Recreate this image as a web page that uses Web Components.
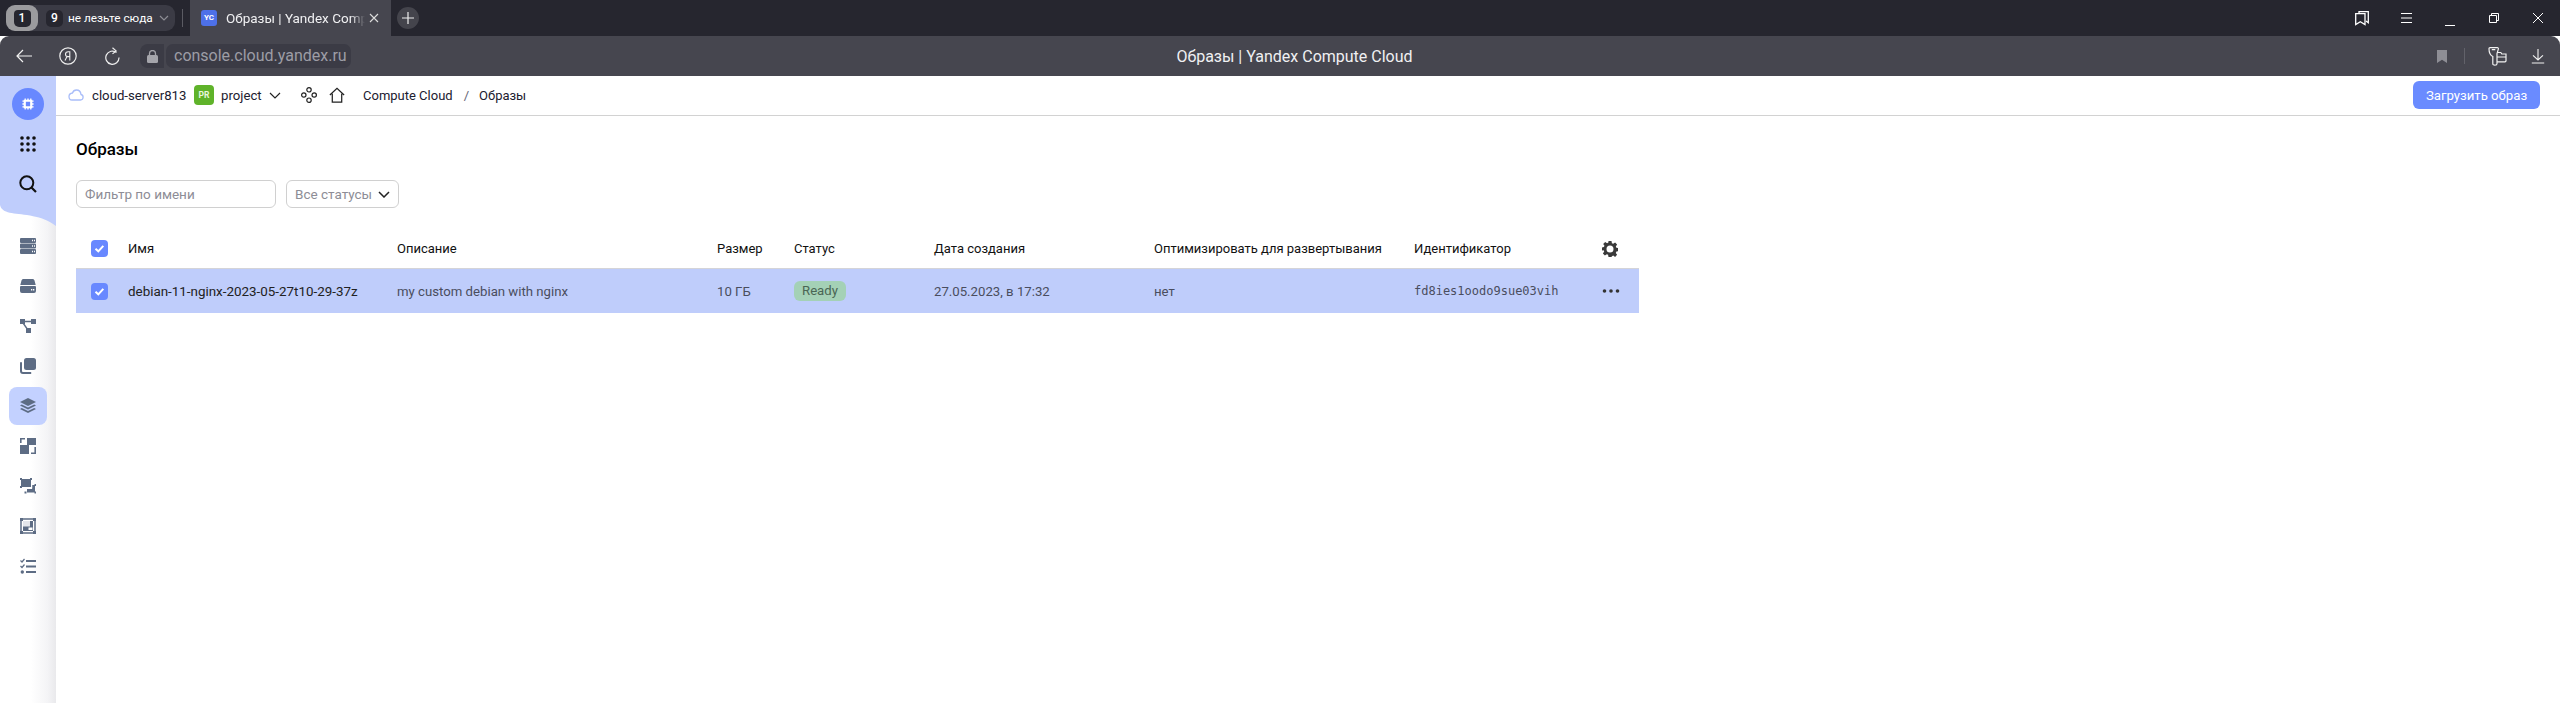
<!DOCTYPE html>
<html lang="ru"><head><meta charset="utf-8"><title>Образы | Yandex Compute Cloud</title>
<style>
html,body{margin:0;height:100%;overflow:hidden;background:#fff}
body{display:flex;flex-direction:column;font-family:Roboto,"Noto Sans",sans-serif}
app-body{flex:1}
</style></head><body>
<browser-tabs></browser-tabs>
<browser-toolbar></browser-toolbar>
<app-body>
  <side-nav slot="nav"></side-nav>
  <top-bar slot="top"></top-bar>
  <images-page></images-page>
</app-body>
<script>
function el(name,html){customElements.define(name,class extends HTMLElement{connectedCallback(){if(this.shadowRoot)return;this.attachShadow({mode:'open'}).innerHTML=typeof html==='function'?html(this):html}})}
const WS='fill="none" stroke="#fff" stroke-width="1.3"';
el('browser-tabs',`<style>
:host{display:flex;height:36px;background:#26262f;color:#fff;align-items:center;font:13px Roboto,sans-serif;box-sizing:border-box;padding-left:6px}
.group{display:flex;align-items:center;width:169px;height:26px;background:#3b3b45;border-radius:9px;box-sizing:border-box}
.one{width:32px;height:26px;border-radius:9px;background:#9b9b9e;display:flex;align-items:center;justify-content:center;flex:none}
.one b{width:17px;height:17px;background:#26262f;border-radius:4px 4px 5px 5px;font:500 12px/17px Roboto,sans-serif;text-align:center}
.nine{width:17px;height:17px;background:#26262f;border-radius:5px;font:500 12px/17px Roboto,sans-serif;text-align:center;margin-left:8px;flex:none}
.name{margin-left:5px;font-size:11.800px;white-space:nowrap;width:84px;flex:none}
.group svg{margin-left:7px;flex:none}
.sep{width:1px;height:18px;background:#5b5b63;margin:0 7px}
.tab{width:201px;height:36px;background:#46464f;display:flex;align-items:center;box-sizing:border-box;padding-left:11px}
.fav{width:16px;height:16px;border-radius:3px;background:#4d70e8;font:700 8px/16px Roboto,sans-serif;text-align:center;flex:none}
.title{margin-left:9px;width:139px;overflow:hidden;white-space:nowrap;font-size:13.5px;color:#f0f0f2;-webkit-mask:linear-gradient(90deg,#000 90%,transparent);mask:linear-gradient(90deg,#000 90%,transparent)}
.tab svg{margin-left:4px}
.plus{width:22px;height:22px;border-radius:50%;background:#44444c;margin-left:6px;display:flex;align-items:center;justify-content:center}
.right{margin-left:auto;display:flex;height:36px}
.right span{width:44px;display:flex;align-items:center;justify-content:center}
</style>
<div class="group"><span class="one"><b>1</b></span><span class="nine">9</span><span class="name">не лезьте сюда</span>
<svg width="10" height="6" viewBox="0 0 10 6"><path d="M1 1l4 4 4-4" fill="none" stroke="#8d8d94" stroke-width="1.2"/></svg></div>
<div class="sep"></div>
<div class="tab"><span class="fav">YC</span><span class="title">Образы | Yandex Compute Cloud</span>
<svg width="10" height="10" viewBox="0 0 10 10"><path d="M1 1l8 8M9 1l-8 8" stroke="#ddd" stroke-width="1.1"/></svg></div>
<div class="plus"><svg width="12" height="12" viewBox="0 0 12 12"><path d="M6 0v12M0 6h12" stroke="#eee" stroke-width="1.2"/></svg></div>
<div class="right">
<span><svg width="14" height="14" viewBox="0 0 14 14" style="overflow:visible"><path d="M4 2.5V0.7h9.3v11L11 10" ${WS}/><path d="M.7 2.6h9.3v11L5.3 10.8.7 13.6z" ${WS}/></svg></span>
<span><svg width="11" height="10" viewBox="0 0 11 10"><path d="M0 .5h11M0 5h11M0 9.500h11" stroke="#fff"/></svg></span>
<span><svg width="10" height="10" viewBox="0 0 10 10" style="overflow:visible"><path d="M0 12.500h10" stroke="#fff" stroke-width="1"/></svg></span>
<span><svg width="10" height="10" viewBox="0 0 10 10"><path d="M2.500 2.500V.5h7v7h-2M.5 2.500h7v7h-7z" fill="none" stroke="#fff"/></svg></span>
<span><svg width="10" height="10" viewBox="0 0 10 10"><path d="M0 0l10 10M10 0L0 10" stroke="#fff"/></svg></span>
</div>`);
el('browser-toolbar',`<style>
:host{display:flex;height:40px;background:#46464f;border-radius:9px 9px 0 0;align-items:center;box-sizing:border-box;color:#fff}
.btn{width:44px;display:flex;justify-content:center;flex:none}
.lock{width:24px;height:24px;background:#3b3b45;border-radius:8px 0 0 8px;display:flex;align-items:center;justify-content:center;margin-left:6px;flex:none}
.url{height:24px;background:#3b3b45;border-radius:7px;margin-left:2px;padding:0 8px;font:16px/24px Roboto,"Noto Sans",sans-serif;color:#9d9da5;white-space:nowrap;flex:none;box-sizing:border-box;width:185px}
.center{flex:1;text-align:center;font:16px Roboto,sans-serif;color:#f0f0f2;margin-left:-90px;padding-right:95px}
.end{display:flex;align-items:center}
.vsep{width:1px;height:16px;background:#62626a;margin:0 7px 0 0}
</style>
<span class="btn" style="margin-left:2px"><svg width="16" height="14" viewBox="0 0 16 14"><path d="M7 1L1 7l6 6M1 7h15" fill="none" stroke="#f2f2f2" stroke-width="1.2"/></svg></span>
<span class="btn"><svg width="18" height="18" viewBox="0 0 18 18"><circle cx="9" cy="9" r="8.200" fill="none" stroke="#eee" stroke-width="1.200"/><path d="M10.800 13.500V4.700H9.200c-1.600 0-2.700 1-2.700 2.500s1 2.400 2.600 2.400h1.700M8 9.600l-2 3.900" fill="none" stroke="#eee" stroke-width="1.100"/></svg></span>
<span class="btn"><svg width="16" height="18" viewBox="0 0 16 18"><path d="M12.500 5.500A6.600 6.600 0 1 0 15 10.500M8.500 0.700l3.600 3.200-3.600 3" fill="none" stroke="#eee" stroke-width="1.200"/></svg></span>
<span class="lock"><svg width="11" height="13" viewBox="0 0 11 13"><rect y="5" width="11" height="8" rx="1.500" fill="#a5a5ab"/><path d="M2.500 5.500V3.500a3 3 0 0 1 6 0v2" fill="none" stroke="#a5a5ab" stroke-width="1.300"/></svg></span>
<span class="url">console.cloud.yandex.ru</span>
<span class="center">Образы | Yandex Compute Cloud</span>
<span class="end">
<span class="btn" style="width:38px;margin-right:3px"><svg width="10" height="13" viewBox="0 0 10 13"><path d="M0 0h10v13L5 9.700 0 13z" fill="#8e8e95"/></svg></span>
<span class="vsep"></span>
<span class="btn" style="margin:0 1px 0 7px;width:36px"><svg width="19" height="19" viewBox="0 0 19 19"><path d="M2 .7h7.300c.8 0 1.200.5 1.100 1.200L9 6.700v10c0 2-4.200 2-4.200 0V9.500C2.500 8.400 1 5 1 1.700 1 1.100 1.400.7 2 .7zM3.800 2.700h3.500M9.200 5.500h3.600l1 1.500H18v6.800a1 1 0 0 1-1 1H9M9 10h9" fill="none" stroke="#f2f2f2" stroke-width="1.200"/></svg></span>
<span class="btn"><svg width="14" height="15" viewBox="0 0 14 15"><path d="M7 0v11M2 6.300L7 11l5-4.700M.8 14h12.400" fill="none" stroke="#f2f2f2" stroke-width="1.100"/></svg></span>
</span>`);
el('app-body',`<style>
:host{display:grid;grid-template-columns:56px 1fr;grid-template-rows:40px 1fr;min-height:0}
.nav{grid-row:1/3}
</style>
<div class="nav"><slot name="nav"></slot></div><div><slot name="top"></slot></div><div><slot></slot></div>`);
const G='#5d6c84';
const icons=[
`<path fill="${G}" fill-rule="evenodd" d="M1 0h14a1 1 0 0 1 1 1v3a1 1 0 0 1-1 1H1a1 1 0 0 1-1-1V1a1 1 0 0 1 1-1zm0 5.500h14a1 1 0 0 1 1 1v3a1 1 0 0 1-1 1H1a1 1 0 0 1-1-1v-3a1 1 0 0 1 1-1zm0 5.500h14a1 1 0 0 1 1 1v3a1 1 0 0 1-1 1H1a1 1 0 0 1-1-1v-3a1 1 0 0 1 1-1zM12 1.800v1.400h1V1.800zm2 0v1.400h1V1.800zm-2 5.500v1.400h1V7.300zm2 0v1.400h1V7.300zm-2 5.500v1.400h1v-1.400zm2 0v1.400h1v-1.400z"/>`,
`<path fill="${G}" fill-rule="evenodd" d="M3.500 1h9c1 0 1.700.6 2 1.500L15.700 7H.3l1.200-4.500C1.800 1.600 2.500 1 3.500 1zM1 8h14a1 1 0 0 1 1 1v4a2 2 0 0 1-2 2H2a2 2 0 0 1-2-2V9a1 1 0 0 1 1-1zm10 3v1.400h1.300V11zm2 0v1.400h1.300V11z"/>`,
`<g fill="${G}"><rect x="0" y="1" width="5" height="5"/><rect x="11" y="1" width="5" height="5"/><rect x="6" y="10" width="5" height="5"/></g><path d="M4 3.500h8M3 5l5 7" stroke="${G}" stroke-width="1.300" fill="none"/>`,
`<rect x="4" y="0" width="12" height="12" rx="2.500" fill="${G}"/><path d="M2.500 3.800v8.700a2 2 0 0 0 2 2h8.200" fill="none" stroke="${G}" stroke-width="2" transform="translate(-1.500 .5)"/>`,
`<path fill="${G}" d="M8 0l8 4-8 4-8-4z"/><path fill="${G}" d="M1.800 6.400L8 9.500l6.200-3.100L16 7.500 8 11.500 0 7.500z"/><path fill="${G}" d="M1.800 10L8 13l6.200-3 1.800 1-8 4-8-4z"/>`,
`<g fill="${G}"><rect x="0" y="7" width="9" height="9"/><rect x="7" y="0" width="9" height="7" /><path d="M0 5V0h5v1.600H1.600V5zM16 9v7h-5v-1.600h3.400V9z"/></g>`,
`<g fill="${G}"><rect x="1" y="1" width="10" height="8"/><rect x="0" y="0" width="2" height="2"/><rect x="10" y="0" width="2" height="2"/><rect x="0" y="8" width="2" height="2"/><rect x="14.500" y="6" width="1.500" height="2"/><rect x="14.500" y="13.500" width="1.500" height="2"/><rect x="4.500" y="13.500" width="2" height="2"/><rect x="7" y="11" width="8" height="3.500"/><rect x="12" y="7" width="3" height="4"/></g><path d="M11.800 7v3.500H6" stroke="#fff" fill="none" stroke-width=".8"/>`,
`<path fill="none" stroke="${G}" stroke-width="1.500" d="M1 1h14v14H1z"/><g fill="${G}"><rect x="0" y="0" width="3" height="3"/><rect x="13" y="0" width="3" height="3"/><rect x="0" y="13" width="3" height="3"/><rect x="13" y="13" width="3" height="3"/><rect x="3" y="3" width="10" height="10"/></g><rect x="3" y="3" width="7" height="5.500" fill="#e3e5ea"/><rect x="8.500" y="9.500" width="4" height="2.500" fill="#fff"/>`,
`<g stroke="${G}" fill="none"><path stroke-width="1.800" d="M6 3h10M6 8.500h10M6 14h10"/><path stroke-width="1.200" d="M.5 2.500l1.500 1.500 2.500-3M.5 8l1.500 1.500 2.500-3"/></g><circle cx="2.300" cy="14" r="1.700" fill="${G}"/>`];
el('side-nav',()=>`<style>
:host{display:flex;flex-direction:column;width:56px;height:100%;background:linear-gradient(90deg,#fff 55%,#f4f4f6 85%,#e9e9ec)}
.top{background:#bfcdfc;height:129px;box-sizing:border-box;padding-top:12px;display:flex;flex-direction:column;align-items:center}
.top .c{width:32px;height:32px;border-radius:50%;background:#6888ff;display:flex;align-items:center;justify-content:center;flex:none}
.top .r{height:40px;display:flex;align-items:center;margin-top:0}
.wave{display:block;height:21px;width:56px}
.items{display:flex;flex-direction:column}
.i{height:40px;display:flex;align-items:center;justify-content:center}
.i b{width:38px;height:38px;border-radius:8px;display:flex;align-items:center;justify-content:center}
.i.on b{background:#c3d1ff}
</style>
<div class="top"><span class="c"><svg width="12" height="12" viewBox="0 0 14 14"><path fill="#fff" fill-rule="evenodd" d="M3 .5h1.500V2h1.700V.5h1.600V2h1.700V.5H11V2h1v1h1.500v1.500H12v1.700h1.500v1.600H12v1.700h1.500V11H12v1h-1v1.500H9.500V12H7.800v1.500H6.200V12H4.500v1.500H3V12H2v-1H.5V9.500H2V7.800H.5V6.200H2V4.500H.5V3H2V2h1zM4.500 4.500v5h5v-5z"/></svg></span>
<span class="r" style="margin-top:4px"><svg width="16" height="16" viewBox="0 0 16 16" fill="#111"><circle cx="2" cy="2" r="1.800"/><circle cx="8" cy="2" r="1.800"/><circle cx="14" cy="2" r="1.800"/><circle cx="2" cy="8" r="1.800"/><circle cx="8" cy="8" r="1.800"/><circle cx="14" cy="8" r="1.800"/><circle cx="2" cy="14" r="1.800"/><circle cx="8" cy="14" r="1.800"/><circle cx="14" cy="14" r="1.800"/></svg></span>
<span class="r"><svg width="18" height="18" viewBox="0 0 18 18"><circle cx="7.800" cy="7.800" r="6.500" fill="none" stroke="#111" stroke-width="2"/><path d="M12.500 12.500L17 17" stroke="#111" stroke-width="2.200"/></svg></span></div>
<svg class="wave" viewBox="0 0 56 21" preserveAspectRatio="none"><path fill="#bfcdfc" d="M0 0H56V21C48 15 42 13 30 10.500 14 8 2 9 0 0z"/></svg>
<div class="items">${icons.map((p,n)=>`<div class="i${n==4?' on':''}"><b><svg width="16" height="16" viewBox="0 0 16 16" style="overflow:visible">${p}</svg></b></div>`).join('')}</div>`);
el('top-bar',`<style>
:host{display:flex;align-items:center;height:40px;box-sizing:border-box;border-bottom:1px solid #d2d2d2;padding:0 20px 1px 12px;font:13.200px Roboto,sans-serif;color:#1c2030;background:#fff}
svg{flex:none;display:block}
.name{width:94px;white-space:nowrap}
.pr{width:20px;height:20px;border-radius:4px;background:#5fb32a;color:#e8f6dc;font:700 8.500px/20px Roboto,sans-serif;text-align:center;margin:0 7px 0 8px;flex:none}
.proj{width:40px}
.b{margin-left:auto;height:28px;padding:0;width:127px;border:0;border-radius:6px;background:#6a8bff;color:#fff;font:13.200px Roboto,sans-serif;flex:none}
.s{margin:0 10px 0 11px;color:#667}
.cc{margin-left:18px;font-size:13px}
</style>
<svg width="16" height="12" viewBox="0 0 16 12" style="margin-right:8px"><path d="M4 11h8.500a2.800 2.800 0 0 0 .5-5.500C12.700 3 10.800 1 8.500 1 6.500 1 5 2.300 4.500 4 2.300 4.300 1 5.700 1 7.500 1 9.500 2.300 11 4 11z" fill="none" stroke="#a9bdf9" stroke-width="1.300"/></svg>
<span class="name">cloud-server813</span><span class="pr">PR</span><span class="proj">project</span>
<svg width="12" height="7" viewBox="0 0 12 7" style="margin-left:8px"><path d="M1 1l5 5 5-5" fill="none" stroke="#222" stroke-width="1.200"/></svg>
<svg width="16" height="16" viewBox="0 0 16 16" style="margin-left:20px"><g fill="none" stroke="#222" stroke-width="1.200"><circle cx="8" cy="2.800" r="2.200"/><circle cx="2.800" cy="8" r="2.200"/><circle cx="13.200" cy="8" r="2.200"/><circle cx="8" cy="13.200" r="2.200"/></g></svg>
<svg width="16" height="17" viewBox="0 0 18 18" style="margin-left:12px"><path d="M1 8.500L9 1l8 7.500M3.700 7v9.500h10.600V7" fill="none" stroke="#222" stroke-width="1.400"/></svg>
<span class="cc">Compute Cloud</span><span class="s">/</span><span class="cc" style="margin:0">Образы</span>
<button class="b">Загрузить образ</button>`);
el('x-check',`<style>:host{display:block;width:17px;height:17px;background:#6888ff;border-radius:4px}svg{display:block}</style><svg width="17" height="17" viewBox="0 0 17 17"><path d="M4.500 8.800l2.800 2.500 5-5.500" fill="none" stroke="#fff" stroke-width="2"/></svg>`);
el('images-page',`<style>
:host{display:block;padding:21px 0 0 20px;font:13.200px Roboto,sans-serif;color:#000}
h1{font:500 17px/24px Roboto,sans-serif;margin:0 0 19px}
.f{display:flex;gap:10px;margin-bottom:21px}
.in,.sel{height:28px;box-sizing:border-box;border:1px solid #d0d0d0;border-radius:6px;display:flex;align-items:center;padding:0 8px;color:#8d8d96;font-size:13.500px}
.in{width:200px}.sel{width:113px;justify-content:space-between}
.t{width:1563px}
.row{display:grid;grid-template-columns:52px 269px 320px 77px 140px 220px 260px 184px 41px;align-items:center}
.h{height:40px;border-bottom:1px solid #d4d4d8;box-sizing:border-box;color:#111;font-size:13px}
.d{height:44px;background:#bfcdfb;color:#4a4d5e}
.row>:first-child{margin-left:15px}
.id{font:12px "DejaVu Sans Mono",monospace}
.ready{display:inline-block;height:20px;line-height:20px;padding:0 8px;border-radius:6px;background:#a4d1b6;color:#4a6654}
svg{display:block}
.g{margin-left:4px}
</style>
<h1>Образы</h1>
<div class="f"><div class="in">Фильтр по имени</div><div class="sel">Все статусы<svg width="12" height="7" viewBox="0 0 12 7"><path d="M1 1l5 5 5-5" fill="none" stroke="#222" stroke-width="1.500"/></svg></div></div>
<div class="t">
<div class="row h"><span><x-check></x-check></span><span>Имя</span><span>Описание</span><span>Размер</span><span>Статус</span><span>Дата создания</span><span>Оптимизировать для развертывания</span><span>Идентификатор</span>
<svg class="g" width="16" height="16" viewBox="0 0 16 16"><path fill="#3a3a3a" fill-rule="evenodd" d="M6.500 0h3l.4 2.200 1.300.6L13.100 1.500l2 2.100-1.300 1.900.6 1.300 2.200.4v3l-2.200.4-.6 1.300 1.300 1.900-2 2.100-1.900-1.300-1.300.6L9.500 16h-3l-.4-2.200-1.300-.6-1.900 1.300-2-2.100 1.300-1.900-.6-1.300L-.3 9.500v-3l2.200-.4.600-1.300L1.200 2.900l2-2 1.900 1.300 1.300-.6zM8 4.500a3.500 3.500 0 1 0 0 7 3.500 3.500 0 0 0 0-7z"/></svg></div>
<div class="row d"><span><x-check></x-check></span><span style="color:#222;font-size:13.400px">debian-11-nginx-2023-05-27t10-29-37z</span><span>my custom debian with nginx</span><span>10 ГБ</span><span><span class="ready">Ready</span></span><span>27.05.2023, в 17:32</span><span>нет</span><span class="id">fd8ies1oodo9sue03vih</span>
<svg class="g" width="18" height="4" viewBox="0 0 18 4" fill="#333"><circle cx="2.500" cy="2" r="1.800"/><circle cx="9" cy="2" r="1.800"/><circle cx="15.500" cy="2" r="1.800"/></svg></div>
</div>`);
</script>
</body></html>
